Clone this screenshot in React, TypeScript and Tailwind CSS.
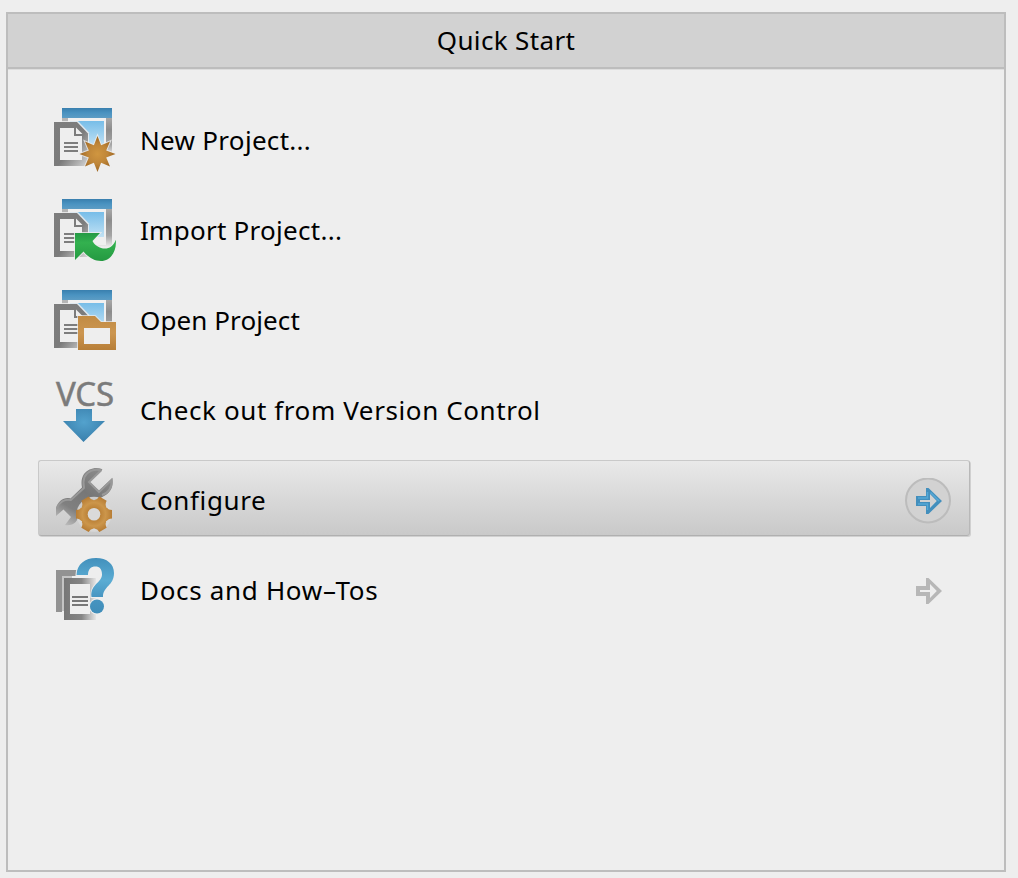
import type { ReactNode } from "react";

function IconFrame({ children }: { children: ReactNode }) {
  return (
    <svg width="80" height="76" viewBox="0 0 80 76" className="block shrink-0 overflow-visible" aria-hidden="true">
      {children}
    </svg>
  );
}

function Gradients() {
  return (
    <svg width="0" height="0" className="absolute" aria-hidden="true">
      <defs>
        <linearGradient id="bar" x1="0" y1="0" x2="0" y2="1">
          <stop offset="0" stopColor="#397fae" />
          <stop offset="0.5" stopColor="#4a93c1" />
          <stop offset="1" stopColor="#5c9cc4" />
        </linearGradient>
        <linearGradient id="frame" x1="0" y1="0" x2="0" y2="1">
          <stop offset="0" stopColor="#a8a8a8" />
          <stop offset="0.3" stopColor="#8c8c8c" />
          <stop offset="0.7" stopColor="#a4a4a4" />
          <stop offset="1" stopColor="#eeeeee" />
        </linearGradient>
        <linearGradient id="sky" x1="0" y1="0" x2="0" y2="1">
          <stop offset="0" stopColor="#77bde8" />
          <stop offset="1" stopColor="#c2e2f5" />
        </linearGradient>
        <linearGradient id="page" x1="0" y1="0" x2="1" y2="1">
          <stop offset="0" stopColor="#7d7d7d" />
          <stop offset="0.55" stopColor="#7b7b7b" />
          <stop offset="1" stopColor="#d6d6d6" />
        </linearGradient>
        <linearGradient id="pageFade" x1="0" y1="0" x2="1" y2="0">
          <stop offset="0" stopColor="#777777" />
          <stop offset="0.55" stopColor="#858585" />
          <stop offset="1" stopColor="#e6e6e6" />
        </linearGradient>
        <radialGradient id="star">
          <stop offset="0" stopColor="#d09640" />
          <stop offset="0.55" stopColor="#bf8639" />
          <stop offset="1" stopColor="#9e6622" />
        </radialGradient>
        <linearGradient id="green" x1="0" y1="0" x2="0" y2="1">
          <stop offset="0" stopColor="#249a45" />
          <stop offset="0.35" stopColor="#33b14f" />
          <stop offset="1" stopColor="#249941" />
        </linearGradient>
        <linearGradient id="folder" x1="0" y1="0" x2="0" y2="1">
          <stop offset="0" stopColor="#c18b44" />
          <stop offset="0.5" stopColor="#cc9650" />
          <stop offset="1" stopColor="#b77e38" />
        </linearGradient>
        <radialGradient id="down" cx="0.5" cy="0.4" r="0.6">
          <stop offset="0" stopColor="#53a2cd" />
          <stop offset="1" stopColor="#397fac" />
        </radialGradient>
        <linearGradient id="wrench" gradientUnits="userSpaceOnUse" x1="60" y1="8" x2="24" y2="68">
          <stop offset="0" stopColor="#8e8e8e" />
          <stop offset="0.45" stopColor="#777777" />
          <stop offset="0.75" stopColor="#808080" />
          <stop offset="1" stopColor="#bcbcbc" />
        </linearGradient>
        <radialGradient id="gear" gradientUnits="userSpaceOnUse" cx="0" cy="0" r="18">
          <stop offset="0.3" stopColor="#b97f35" />
          <stop offset="0.65" stopColor="#cc964b" />
          <stop offset="1" stopColor="#b77d35" />
        </radialGradient>
        <linearGradient id="question" gradientUnits="userSpaceOnUse" x1="0" y1="8" x2="0" y2="64">
          <stop offset="0" stopColor="#4290bc" />
          <stop offset="0.4" stopColor="#5bacd3" />
          <stop offset="0.7" stopColor="#4795c1" />
          <stop offset="1" stopColor="#3f8db9" />
        </linearGradient>
      </defs>
    </svg>
  );
}

function ProjectBase({ dy }: { dy: number }) {
  return (
    <g transform={`translate(0 ${dy})`}>
      <path d="M16 18H66V56H16Z" fill="url(#frame)" />
      <path d="M22 18H60V54H22Z" fill="#f0f0f0" />
      <path d="M24 21H58V46H24Z" fill="url(#sky)" />
      <path d="M16 8H66V18H16Z" fill="url(#bar)" />
      <path d="M16 18H22V22H16Z" fill="#b5b5b5" />
      <path d="M7 21H32L43 32.5V68H7Z" fill="#eeeeee" fillOpacity="0.85" />
      <path d="M8 22H31L42 33.5V66H8Z" fill="url(#page)" />
      <path d="M14 28H28V36H36V60H14Z" fill="#eeeeee" />
      <path d="M30 27.5L36.5 34H30Z" fill="#eeeeee" />
      <path d="M18 43H32M18 47H32M18 51H32" stroke="#7d7d7d" strokeWidth="2" />
    </g>
  );
}

function NewProjectIcon() {
  return (
    <IconFrame>
      <ProjectBase dy={0} />
      <path
        d="M51.5 36L55.1 45.3L64 41.5L60.2 50.4L69.5 54L60.2 57.6L64 66.5L55.1 62.7L51.5 72L47.9 62.7L39 66.5L42.8 57.6L33.5 54L42.8 50.4L39 41.5L47.9 45.3Z"
        fill="url(#star)"
        stroke="#eeeeee"
        strokeOpacity="0.8"
        strokeWidth="2"
        paintOrder="stroke"
      />
    </IconFrame>
  );
}

function ImportProjectIcon() {
  return (
    <IconFrame>
      <ProjectBase dy={1} />
      <path
        d="M29 43H54L46.5 51C50 58.5 65 64 69.8 49.8C71 62 64 71 55 71C48 71 42 67 37.5 61.5L29 70Z"
        fill="url(#green)"
        stroke="#eeeeee"
        strokeOpacity="0.8"
        strokeWidth="2"
        paintOrder="stroke"
      />
    </IconFrame>
  );
}

function OpenProjectIcon() {
  return (
    <IconFrame>
      <ProjectBase dy={2} />
      <path
        fillRule="evenodd"
        d="M32 36H49L55 42H70V70H32ZM38 48V64H64V48Z"
        fill="url(#folder)"
        stroke="#eeeeee"
        strokeOpacity="0.7"
        strokeWidth="2"
        paintOrder="stroke"
      />
      <path d="M38 48H64V64H38Z" fill="#eeeeee" />
    </IconFrame>
  );
}

function VcsIcon() {
  return (
    <IconFrame>
      <text
        x="10"
        y="35.5"
        textLength="58"
        lengthAdjust="spacing"
        fill="#7b7b7b"
        stroke="#7b7b7b"
        strokeWidth="0.5"
        className="font-['Noto_Sans',sans-serif] text-[33px]"
      >
        VCS
      </text>
      <path d="M30 39H46V51H59L37.5 72L17 51H30Z" fill="url(#down)" />
    </IconFrame>
  );
}

const toothAngles = [0, 60, 120, 180, 240, 300];

function ConfigureIcon() {
  return (
    <IconFrame>
      <path
        d="M56.500 9.200C50 6.500 42 8.500 38 14C35.500 18 35 22 36 27.500L24.500 38.500C18.500 36.500 12 41 10 48V56L17.500 49.500L25 57L19 65C27 66.500 33 61 32.500 54L44 44L58 36C64 33 68 27 66.300 18L53 30.500L43.500 22Z"
        fill="url(#wrench)"
      />
      <path
        d="M55 10.200C48 8.500 41 11.500 38.500 17C37 21 37 24 38 28L25 40C19 38.500 13 42 11 48.500M55.500 10L43 22L53 32L65.500 20C66 28 62 33 56 35"
        fill="none"
        stroke="#989898"
        strokeWidth="2"
      />
      <g transform="translate(48 54.300)">
        <circle r="17.500" fill="#d9d9d9" fillOpacity="0.85" />
        <circle r="13.500" fill="url(#gear)" />
        {toothAngles.map((angle) => (
          <path
            key={angle}
            d="M9 -8L13 -6.500Q14 -4.500 18 -4.200V4.200Q14 4.500 13 6.500L9 8Z"
            transform={`rotate(${angle})`}
            fill="url(#gear)"
          />
        ))}
        <circle r="6.300" fill="#dadada" />
      </g>
    </IconFrame>
  );
}

function DocsIcon() {
  return (
    <IconFrame>
      <path d="M10 20H34V26H16V62H10Z" fill="#929292" />
      <path d="M16 26H26V61H16Z" fill="#c4c4c4" />
      <path d="M18 28H50V70H18Z" fill="url(#pageFade)" />
      <path d="M24 34H44V64H24Z" fill="#eeeeee" />
      <path d="M26 47H42M26 51H42M26 55H42" stroke="#777777" strokeWidth="2" />
      <g fill="url(#question)" stroke="#eeeeee" strokeWidth="2" paintOrder="stroke">
        <path d="M30.500 25C31 14 39 8 50 8C61 8 68 14 68 23C68 36 57 36 57 47H45.500C44 34 56 33 56 24.500C56 19 53.500 16.500 49.500 16.500C45 16.500 42 19 42 25Z" />
        <circle cx="51" cy="56.500" r="7" />
      </g>
    </IconFrame>
  );
}

function MoreArrow({ active = false }: { active?: boolean }) {
  return (
    <svg width="46" height="46" viewBox="0 0 46 46" className="block shrink-0" aria-hidden="true">
      {active && <circle cx="23" cy="22.500" r="22" fill="#d2d2d2" stroke="#bcbcbc" strokeWidth="2" />}
      <path
        fillRule="evenodd"
        d="M21 10H23.500L37 23L23.500 36H21V28H11V18H21ZM25 16V22H15V24H25V30L31.800 23Z"
        fill={active ? "#438fbd" : "#b7b7b7"}
      />
      {active && <path d="M22.500 14V20H13M22.500 32V26H13M25.500 14.500L34 23" fill="none" stroke="#56a9d6" strokeWidth="1.500" />}
    </svg>
  );
}

type Action = {
  label: string;
  icon: ReactNode;
  spacing: string;
  more?: boolean;
  active?: boolean;
};

const actions: Action[] = [
  { label: "New Project...", icon: <NewProjectIcon />, spacing: "tracking-[0.3px]" },
  { label: "Import Project...", icon: <ImportProjectIcon />, spacing: "tracking-[0.27px]" },
  { label: "Open Project", icon: <OpenProjectIcon />, spacing: "tracking-[0.1px]" },
  { label: "Check out from Version Control", icon: <VcsIcon />, spacing: "tracking-[0.6px]" },
  { label: "Configure", icon: <ConfigureIcon />, spacing: "tracking-[0.6px]", more: true, active: true },
  { label: "Docs and How–Tos", icon: <DocsIcon />, spacing: "tracking-[0.68px]", more: true },
];

function ActionRow({ label, icon, spacing, more, active }: Action) {
  return (
    <button
      type="button"
      className={
        active
          ? "flex h-[76px] w-[932px] items-start rounded-[3px] border border-[#c9c9c9] border-b-[#b0b0b0] border-r-[#b8b8b8] bg-linear-to-b from-[#e9e9e9] to-[#c9c9c9] text-left shadow-[1px_1px_0_#d0d0d0]"
          : "flex h-[76px] w-[932px] items-start rounded-[3px] border border-transparent text-left"
      }
    >
      <span className="-mt-px ml-[7px] flex">{icon}</span>
      <span className={`ml-3.5 mt-[21px] flex-1 whitespace-nowrap text-[26px] leading-9 text-black ${spacing}`}>{label}</span>
      {more && (
        <span className="mr-[18px] mt-[17px]">
          <MoreArrow active={active} />
        </span>
      )}
    </button>
  );
}

export default function App() {
  return (
    <main className="h-[878px] w-[1018px] bg-[#eeeeee] pl-1.5 pt-3 font-['Noto_Sans','Open_Sans',sans-serif]">
      <Gradients />
      <section className="flex h-[860px] w-[1000px] flex-col border-2 border-[#bdbdbd]">
        <header className="flex h-[55px] shrink-0 items-start justify-center border-b-2 border-[#bdbdbd] bg-[#d2d2d2] pt-2">
          <h1 className="text-[26px] leading-9 tracking-[0.35px] text-black">Quick Start</h1>
        </header>
        <div className="h-px shrink-0 bg-[#dedede]" />
        <div className="flex flex-col gap-3.5 pl-[30px] pt-[30px]">
          {actions.map((action) => (
            <ActionRow key={action.label} {...action} />
          ))}
        </div>
      </section>
    </main>
  );
}
